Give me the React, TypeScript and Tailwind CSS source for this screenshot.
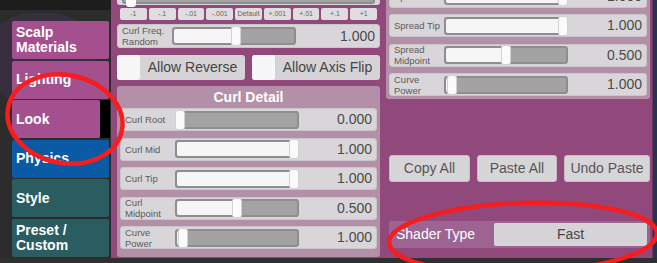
import React from "react";

type SliderRowProps = {
  label: string;
  value: string;
  fill: number;
  className?: string;
};

function Slider({ fill }: { fill: number }) {
  const handleLeft = fill * (124 - 10);
  return (
    <div className="relative h-[18px] w-[124px] shrink-0 rounded-[3px] border-2 border-[#8e8e8e] bg-[#a3a3a3]">
      <div
        className="absolute left-0 top-0 h-full rounded-l-[2px] bg-[#f6f6f6]"
        style={{ width: handleLeft + 4 }}
      />
      <div
        className="absolute top-[-3px] h-[20px] w-[10px] rounded-[3px] border border-[#d2d2d2] bg-[#fbfbfb]"
        style={{ left: handleLeft - 2 }}
      />
    </div>
  );
}

function SliderRow({ label, value, fill, className = "" }: SliderRowProps) {
  return (
    <div
      className={`flex h-[23px] shrink-0 items-center rounded-[3px] border border-[#c9c5c9] bg-[#d9d6d9] pl-[4px] pr-[4px] ${className}`}
    >
      <div className="w-[50px] shrink-0 text-[9.5px] leading-[11px] text-[#5a5a5a]">
        {label}
      </div>
      <Slider fill={fill} />
      <div className="flex-1 text-right text-[14px] text-[#4a4a4a]">{value}</div>
    </div>
  );
}

function Tab({
  children,
  color,
}: {
  children: React.ReactNode;
  color: string;
}) {
  return (
    <div
      className={`flex h-[38px] w-[97px] items-center rounded-[2px] pl-[4px] text-[14px] font-bold leading-[15px] text-white ${color}`}
    >
      {children}
    </div>
  );
}

const steps = ["-1", "-.1", "-.01", "-.001", "Default", "+.001", "+.01", "+.1", "+1"];

export default function App() {
  return (
    <div className="relative h-[263px] w-[657px] overflow-hidden bg-[#2d2d2d] font-['Liberation_Sans',Arial,sans-serif]">
      <div className="flex h-[258px]">
        {/* tabs */}
        <div className="relative w-[111px] shrink-0 bg-[#2c2c2c] pl-[12px] pt-[21px]">
          <div className="absolute left-0 top-0 h-[10px] w-full bg-[#1d1d1d]" />
          <div className="absolute left-[-14px] top-[13px] h-[92px] w-[110px] rounded-[45px] bg-[#382f3e]" />
          <div className="relative flex flex-col gap-[1.5px]">
            <Tab color="bg-[#a4508f]">
              Scalp
              <br />
              Materials
            </Tab>
            <Tab color="bg-[#a4508f]">Lighting</Tab>
            <div className="flex">
              <div className="flex h-[38px] w-[88px] items-center rounded-[2px] bg-[#a4508f] pl-[4px] text-[14px] font-bold text-white">
                Look
              </div>
              <div className="h-[38px] w-[10px] bg-black" />
            </div>
            <Tab color="bg-[#0b5aa6]">Physics</Tab>
            <Tab color="bg-[#2a5d61]">Style</Tab>
            <Tab color="bg-[#2a5d61]">
              Preset /
              <br />
              Custom
            </Tab>
          </div>
        </div>

        {/* main panel */}
        <div className="flex w-[542px] shrink-0 gap-[6px] border-r border-[#6b3560] bg-[#91497b] pl-[6px] pr-[2px]">
          {/* left column */}
          <div className="flex w-[263px] shrink-0 flex-col">
            <div className="mt-[-18px] flex h-[23px] items-end rounded-[3px] bg-[#d9d6d9] px-[5px] pb-[1px]">
              <div className="relative h-[16px] w-full rounded-[3px] border-2 border-[#8e8e8e] bg-[#a3a3a3]">
                <div className="absolute left-[2px] top-[-3px] h-[20px] w-[10px] rounded-[3px] bg-[#fbfbfb]" />
              </div>
            </div>
            <div className="mt-[3px] flex h-[12px] gap-[2px] px-[3px]">
              {steps.map((s) => (
                <div
                  key={s}
                  className="flex flex-1 items-center justify-center rounded-[2px] bg-[#e0dde0] text-[7px] text-[#666]"
                >
                  {s}
                </div>
              ))}
            </div>
            <SliderRow className="mt-[4px] h-[24px]" label="Curl Freq. Random" value="1.000" fill={0.52} />
            <div className="mt-[7px] flex h-[25px] gap-[7px]">
              {["Allow Reverse", "Allow Axis Flip"].map((t) => (
                <div key={t} className="flex flex-1 rounded-[3px] bg-[#d6d3d6]">
                  <div className="w-[23px] rounded-[3px] bg-[#f7f7f7]" />
                  <div className="flex flex-1 items-center justify-center text-[14px] text-[#454545]">
                    {t}
                  </div>
                </div>
              ))}
            </div>
            <div className="mt-[6px] flex h-[171px] flex-col rounded-[3px] bg-[#b490a8] px-[3px]">
              <div className="flex h-[22px] items-center justify-center text-[14px] font-bold text-white">
                Curl Detail
              </div>
              <div className="flex flex-col gap-[6.5px]">
                <SliderRow label="Curl Root" value="0.000" fill={0} />
                <SliderRow label="Curl Mid" value="1.000" fill={1} />
                <SliderRow label="Curl Tip" value="1.000" fill={1} />
                <SliderRow label="Curl Midpoint" value="0.500" fill={0.5} />
                <SliderRow label="Curve Power" value="1.000" fill={0.03} />
              </div>
            </div>
          </div>

          {/* right column */}
          <div className="flex w-[264px] shrink-0 flex-col">
            <div className="rounded-b-[3px] bg-[#b490a8] px-[3px] pb-[3px]">
              <div className="mt-[-15.5px] flex flex-col gap-[6.5px]">
                <SliderRow label="Spread Mid" value="1.000" fill={1} />
                <SliderRow label="Spread Tip" value="1.000" fill={1} />
                <SliderRow label="Spread Midpoint" value="0.500" fill={0.5} />
                <SliderRow label="Curve Power" value="1.000" fill={0.03} />
              </div>
            </div>
            <div className="mt-[56px] flex h-[27px] gap-[7px] pl-[3px]">
              <div className="flex w-[81px] items-center justify-center rounded-[3px] border border-[#c4bfc4] bg-[#d8d5d8] text-[14px] text-[#555]">
                Copy All
              </div>
              <div className="flex w-[80px] items-center justify-center rounded-[3px] border border-[#c4bfc4] bg-[#d8d5d8] text-[14px] text-[#555]">
                Paste All
              </div>
              <div className="flex w-[86px] items-center justify-center rounded-[3px] border border-[#c4bfc4] bg-[#d8d5d8] text-[14px] text-[#555]">
                Undo Paste
              </div>
            </div>
            <div className="ml-[3px] mt-[39px] flex h-[27px] items-center rounded-[2px] bg-[#9d6491] pl-[7px] pr-[3px]">
              <div className="flex-1 text-[14px] text-white">Shader Type</div>
              <div className="flex h-[23px] w-[153px] items-center justify-center rounded-[2px] bg-[#d6d3d6] text-[14px] text-[#454545]">
                Fast
              </div>
            </div>
          </div>
        </div>

        <div className="flex-1 bg-[#25354f]" />
      </div>
      <div className="h-[5px] bg-[#2f2f2f]" />

      {/* red annotation marks */}
      <svg className="pointer-events-none absolute inset-0" width="657" height="263">
        <ellipse cx="65" cy="119" rx="58" ry="44" transform="rotate(12 65 119)" fill="none" stroke="#f51d1d" strokeWidth="4.5" />
        <ellipse cx="523" cy="238" rx="134" ry="35" transform="rotate(-2 523 238)" fill="none" stroke="#f51d1d" strokeWidth="4.5" />
      </svg>
    </div>
  );
}
